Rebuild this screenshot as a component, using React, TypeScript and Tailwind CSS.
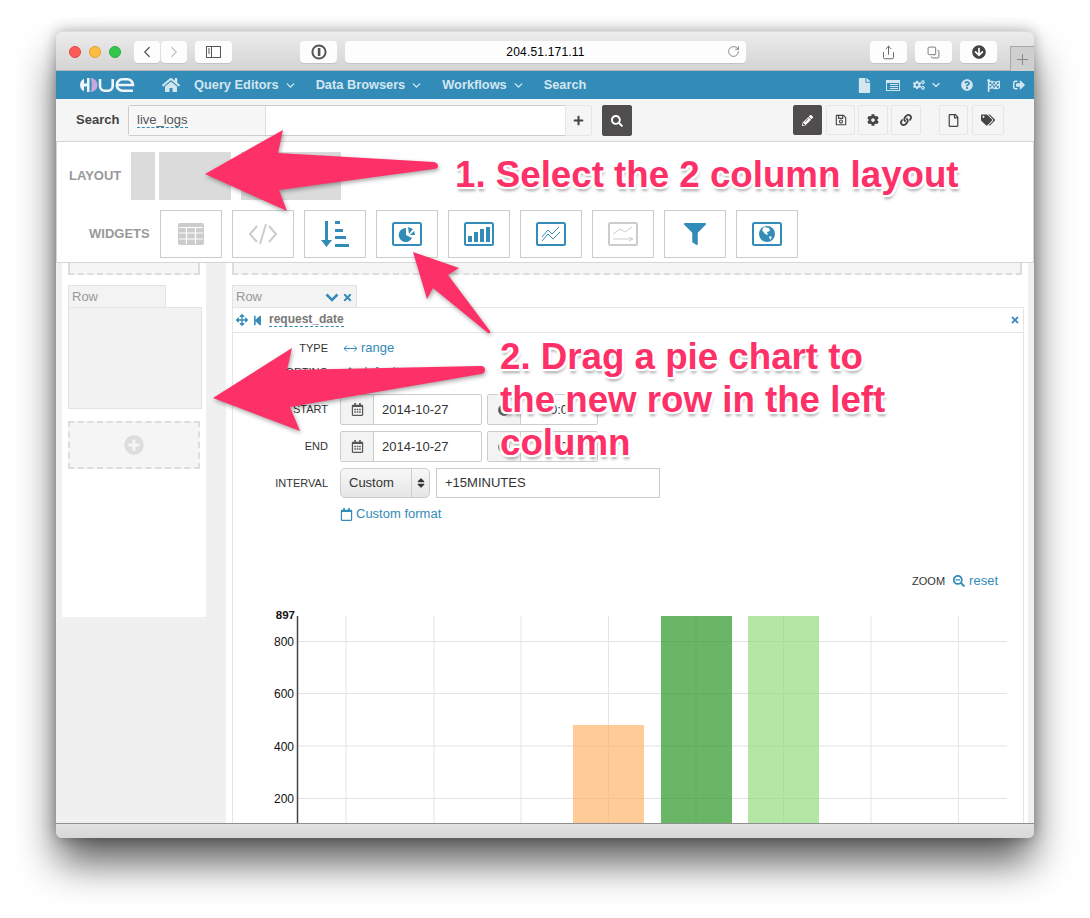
import { ChevronDown, ChevronLeft, ChevronRight, Copy, RotateCw, Share } from "lucide-react";
import {
  FaArrowCircleDown,
  FaArrowsAlt,
  FaClock,
  FaCog,
  FaCogs,
  FaFile,
  FaFilter,
  FaFlagCheckered,
  FaHome,
  FaLink,
  FaPencilAlt,
  FaPlus,
  FaPlusCircle,
  FaQuestionCircle,
  FaRegCalendar,
  FaRegCalendarAlt,
  FaRegFile,
  FaRegSave,
  FaSearch,
  FaSearchMinus,
  FaSignOutAlt,
  FaSort,
  FaStepBackward,
  FaTags,
  FaTimes,
} from "react-icons/fa";

const BLUE = "#338bb8";

function Logo() {
  return (
    <svg width="56" height="14" viewBox="0 0 56 14" className="shrink-0">
      <path d="M8 0 A7 7 0 0 0 8 14 Z" fill="#eef4f8" />
      <rect x="5" y="0" width="3" height="5.5" fill={BLUE} />
      <rect x="5" y="8.5" width="3" height="5.5" fill={BLUE} />
      <rect x="8" y="0" width="2.5" height="14" fill="#eef4f8" />
      <path d="M11.5 0 A7 7 0 0 1 11.5 14 Q14 7 11.5 0 Z" fill="#c9a6df" />
      <path d="M21 1 V8 A4.7 4.7 0 0 0 25.7 12.7 H29 A4.7 4.7 0 0 0 33.7 8 V1" fill="none" stroke="#eef4f8" strokeWidth="2.6" />
      <path d="M38 7 H54 A5.7 5.7 0 0 0 48.3 1.3 H43.5 A5.7 5.7 0 0 0 43.5 12.7 H54" fill="none" stroke="#eef4f8" strokeWidth="2.6" />
    </svg>
  );
}

function TitleButton({ className, children }: { className: string; children?: React.ReactNode }) {
  return (
    <div className={`h-[22px] rounded-[4px] bg-[#fdfdfd] flex items-center justify-center text-[#555] shadow-[0_1px_0_#c4c4c4] ${className}`}>
      {children}
    </div>
  );
}

function TitleBar() {
  return (
    <div className="h-[40px] shrink-0 flex pt-[9px] pl-[13px] bg-gradient-to-b from-[#ececec] to-[#d4d4d4] border-t border-[#dcdcdc] border-b-[1px] border-b-[#b5b5b5] rounded-t-[6px]">
      <div className="flex gap-2 pt-[5px]">
        <div className="w-3 h-3 rounded-full bg-[#fc5b57] border border-[#e2463f]" />
        <div className="w-3 h-3 rounded-full bg-[#fdbc40] border border-[#e1a029]" />
        <div className="w-3 h-3 rounded-full bg-[#34c84a] border border-[#2bad3c]" />
      </div>
      <TitleButton className="w-[26px] ml-[13px]"><ChevronLeft size={18} strokeWidth={1.6} /></TitleButton>
      <TitleButton className="w-[26px] ml-px text-[#c4c4c4]"><ChevronRight size={18} strokeWidth={1.6} /></TitleButton>
      <TitleButton className="w-[37px] ml-2">
        <svg width="15" height="12" viewBox="0 0 15 12" fill="none" stroke="#555"><rect x=".5" y=".5" width="14" height="11" /><path d="M5.5 .5V11.5M2 3H4M2 5H4M2 7H4" /></svg>
      </TitleButton>
      <TitleButton className="w-[37px] ml-[68px]">
        <svg width="16" height="16" viewBox="0 0 16 16"><circle cx="8" cy="8" r="6.6" fill="none" stroke="#555" strokeWidth="2" /><rect x="6.8" y="4" width="2.6" height="8" fill="#555" /></svg>
      </TitleButton>
      <div className="w-[401px] ml-2 h-[22px] rounded-[4px] bg-[#fdfdfd] shadow-[0_1px_0_#c4c4c4] relative flex items-center justify-center text-[12px] text-black tracking-[0.2px]">
        204.51.171.11
        <RotateCw size={13} strokeWidth={1.4} className="absolute right-[6px] top-[4px] text-[#666]" />
      </div>
      <TitleButton className="w-[37px] ml-[124px]"><Share size={15} strokeWidth={1.4} /></TitleButton>
      <TitleButton className="w-[37px] ml-2"><Copy size={13} strokeWidth={1.4} className="-scale-x-100 -scale-y-100" /></TitleButton>
      <TitleButton className="w-[37px] ml-2"><FaArrowCircleDown size={14} className="text-[#444]" /></TitleButton>
      <div className="w-[24px] h-[25px] ml-[13px] -mb-[1px] self-end border-l border-t border-[#a8a8a8] bg-[#cfcfcf] flex items-center justify-center">
        <PlusThin />
      </div>
    </div>
  );
}

function PlusThin() {
  return (
    <svg width="11" height="11" viewBox="0 0 11 11" stroke="#888"><path d="M5.5 0V11M0 5.5H11" /></svg>
  );
}

function NavItem({ label, caret = true, className }: { label: string; caret?: boolean; className: string }) {
  return (
    <div className={`flex items-center whitespace-nowrap font-bold text-[12.8px] text-[#d3e6f0] ${className}`}>
      {label}
      {caret && <ChevronDown size={13} strokeWidth={2.6} className="ml-[5px]" />}
    </div>
  );
}

function Nav() {
  return (
    <div className="h-[28px] shrink-0 flex items-center pl-[23px] pr-[9px] bg-[#338bb8] text-[#d3e6f0]">
      <Logo />
      <FaHome size={18} className="ml-[27px]" />
      <NavItem label="Query Editors" className="ml-[14px]" />
      <NavItem label="Data Browsers" className="ml-[19px]" />
      <NavItem label="Workflows" className="ml-[19px]" />
      <NavItem label="Search" caret={false} className="ml-[19px]" />
      <FaFile size={15} className="ml-auto" />
      <svg width="14" height="11" viewBox="0 0 14 11" className="ml-[14px]">
        <rect width="14" height="11" fill="#d3e6f0" />
        <path d="M1 3H13V10H1Z" fill={BLUE} />
        <path d="M4 4.5H12M4 6.5H12M4 8.5H12" stroke="#d3e6f0" />
      </svg>
      <FaCogs size={12} className="ml-[13px]" />
      <ChevronDown size={12} strokeWidth={2.6} className="ml-[5px]" />
      <FaQuestionCircle size={12} className="ml-[19px]" />
      <FaFlagCheckered size={13} className="ml-[14px]" />
      <FaSignOutAlt size={12} className="ml-[13px]" />
    </div>
  );
}

function ToolButton({ dark, className, children }: { dark?: boolean; className: string; children: React.ReactNode }) {
  return (
    <div
      className={`h-[30px] flex items-center justify-center rounded-[2px] border ${
        dark ? "bg-[#504d4f] border-[#504d4f] text-white" : "bg-[#f5f5f5] border-[#e6e6e6] text-[#444]"
      } ${className}`}
    >
      {children}
    </div>
  );
}

function SearchBar() {
  return (
    <div className="h-[42px] shrink-0 flex items-start pt-[6px] pl-[20px] bg-[#f5f5f5] text-[#444]">
      <div className="w-[52px] h-[28px] mt-px flex items-center font-bold text-[13px]">Search</div>
      <div className="w-[437px] h-[31px] flex bg-white border border-[#ccc] rounded-l-[3px] border-r-0">
        <div className="w-[137px] bg-[#f7f7f7] border-r border-[#ddd] pl-[8px] flex items-center text-[13px] text-[#555]">
          <span className="border-b border-dashed border-[#338bb8] leading-[14px]">live_logs</span>
        </div>
      </div>
      <ToolButton className="w-[27px] h-[31px] rounded-l-none"><FaPlus size={11} /></ToolButton>
      <ToolButton dark className="w-[30px] h-[31px] ml-[10px]"><FaSearch size={12} /></ToolButton>
      <ToolButton dark className="w-[29px] ml-[161px]"><FaPencilAlt size={11} /></ToolButton>
      <ToolButton className="w-[29px] ml-[4px]"><FaRegSave size={12} /></ToolButton>
      <ToolButton className="w-[30px] ml-[3px]"><FaCog size={12} /></ToolButton>
      <ToolButton className="w-[30px] ml-[3px]"><FaLink size={12} /></ToolButton>
      <ToolButton className="w-[29px] ml-[18px]"><FaRegFile size={13} /></ToolButton>
      <ToolButton className="w-[32px] ml-[4px]"><FaTags size={14} /></ToolButton>
    </div>
  );
}

function WidgetBox({ children }: { children: React.ReactNode }) {
  return <div className="w-[62px] h-[48px] border border-[#ccc] bg-white flex items-center justify-center">{children}</div>;
}

function ChartFrame({ color = BLUE, children }: { color?: string; children: React.ReactNode }) {
  return (
    <svg width="30" height="24" viewBox="0 0 30 24">
      <rect x="1" y="1" width="28" height="22" rx="1.5" fill="none" stroke={color} strokeWidth="2" />
      {children}
    </svg>
  );
}

function LayoutPanel() {
  return (
    <div className="h-[122px] shrink-0 bg-white border border-[#d5d5d5] rounded-[2px] relative z-10 flex flex-col">
      <div className="flex h-[58px] items-start pt-[10px] pl-[12px]">
        <div className="w-[62px] h-[48px] flex items-center font-bold text-[13px] text-[#999]">LAYOUT</div>
        <div className="w-[24px] h-[48px] bg-[#dbdbdb]" />
        <div className="w-[72px] h-[48px] bg-[#dbdbdb] ml-[4px]" />
        <div className="w-[100px] h-[48px] bg-[#dbdbdb] ml-[10px]" />
      </div>
      <div className="flex items-center pl-[32px] pt-[10px]">
        <div className="w-[71px] font-bold text-[13px] text-[#999]">WIDGETS</div>
        <div className="flex gap-[10px]">
          <WidgetBox>
            <svg width="26" height="22" viewBox="0 0 26 22">
              <rect width="26" height="22" rx="2" fill="#ccc" />
              <path d="M1 4.5H25M1 10H25M1 16H25M8.5 4V21M17.5 4V21" stroke="#fff" strokeWidth="1.2" />
            </svg>
          </WidgetBox>
          <WidgetBox>
            <svg width="30" height="24" viewBox="0 0 30 24" fill="none" stroke="#ccc" strokeWidth="2"><path d="M9 4L2 12L9 20M21 4L28 12L21 20M18 2L12 22" /></svg>
          </WidgetBox>
          <WidgetBox>
            <svg width="28" height="28" viewBox="0 0 28 28" fill={BLUE}>
              <path d="M4 1H7V20H11L5.5 27L0 20H4Z" />
              <rect x="14" y="1" width="5" height="3" />
              <rect x="14" y="9" width="8" height="3" />
              <rect x="14" y="16" width="11" height="3" />
              <rect x="14" y="24" width="14" height="3" />
            </svg>
          </WidgetBox>
          <WidgetBox>
            <ChartFrame>
              <path d="M14 6V13L20 16A7 7 0 1 1 14 6Z" fill={BLUE} />
              <path d="M16 5L21 7L17 12Z" fill={BLUE} />
              <path d="M22 9L23 13L18 13Z" fill={BLUE} />
            </ChartFrame>
          </WidgetBox>
          <WidgetBox>
            <ChartFrame>
              <g fill={BLUE}><rect x="4" y="14" width="4" height="6" /><rect x="10" y="10" width="4" height="10" /><rect x="16" y="7" width="4" height="13" /><rect x="22" y="5" width="4" height="15" /></g>
            </ChartFrame>
          </WidgetBox>
          <WidgetBox>
            <ChartFrame>
              <path d="M6 15L12 8L16 12L23 5M6 19L12 12L17 17L24 10" fill="none" stroke={BLUE} />
            </ChartFrame>
          </WidgetBox>
          <WidgetBox>
            <ChartFrame color="#ccc">
              <path d="M5 12L12 7L17 10L24 5M5 17H24M21 15L25 17L21 19" fill="none" stroke="#ccc" />
            </ChartFrame>
          </WidgetBox>
          <WidgetBox><FaFilter size={22} style={{ color: BLUE }} /></WidgetBox>
          <WidgetBox>
            <ChartFrame>
              <circle cx="15" cy="12" r="8" fill={BLUE} />
              <path d="M12 5L17 6L18 9L15 10L16 13L13 12L10 8ZM17 14L20 15L18 18Z" fill="#fff" />
            </ChartFrame>
          </WidgetBox>
        </div>
      </div>
    </div>
  );
}

function DashedStub({ className }: { className: string }) {
  return <div className={`h-[12px] bg-[#f5f5f5] border-2 border-t-0 border-dashed border-[#ddd] ${className}`} />;
}

function LeftColumn() {
  return (
    <div className="w-[170px] shrink-0 bg-[#f0f0f0] pl-[6px]">
      <div className="w-[144px] h-[354px] bg-white pl-[6px]">
        <DashedStub className="w-[132px]" />
        <div className="w-[98px] h-[22px] mt-[10px] bg-[#f3f3f3] border border-b-0 border-[#e3e3e3] pl-[3px] text-[13px] leading-[21px] text-[#999]">Row</div>
        <div className="w-[134px] h-[102px] bg-[#f2f2f2] border border-[#e3e3e3]" />
        <div className="w-[132px] h-[48px] mt-[12px] bg-[#f5f5f5] border-2 border-dashed border-[#ddd] flex items-center justify-center">
          <FaPlusCircle size={20} className="text-[#ddd]" />
        </div>
      </div>
    </div>
  );
}

function FieldLabel({ children }: { children: React.ReactNode }) {
  return <div className="w-[95px] text-right text-[11px] text-[#333] shrink-0">{children}</div>;
}

function DateField({ value }: { value: string }) {
  return (
    <div className="flex gap-[5px] h-[31px]">
      <div className="w-[142px] flex border border-[#ccc] rounded-[2px]">
        <div className="w-[33px] bg-[#f3f3f3] border-r border-[#ccc] flex items-center justify-center"><FaRegCalendarAlt size={13} className="text-[#555]" /></div>
        <div className="flex-1 flex items-center pl-[8px] text-[13px] text-[#333]">{value}</div>
      </div>
      <div className="w-[111px] flex border border-[#ccc] rounded-[2px]">
        <div className="w-[33px] bg-[#f3f3f3] border-r border-[#ccc] flex items-center justify-center"><FaClock size={12} className="text-[#555]" /></div>
        <div className="flex-1 flex items-center justify-center text-[13px] text-[#333]">00:00</div>
      </div>
    </div>
  );
}

function Facet() {
  return (
    <div className="flex flex-col pb-[8px]">
      <div className="flex items-center h-[24px] mt-[3px] gap-[16px]">
        <FieldLabel>TYPE</FieldLabel>
        <div className="flex items-center gap-[4px] text-[13px]" style={{ color: BLUE }}>
          <svg width="13" height="7" viewBox="0 0 13 7" fill="none" stroke={BLUE}><path d="M0 3.5H13M3 .5L0 3.5L3 6.5M10 .5L13 3.5L10 6.5" /></svg>
          range
        </div>
      </div>
      <div className="flex items-center h-[24px] gap-[16px]">
        <FieldLabel>SORTING</FieldLabel>
        <div className="flex items-center gap-[4px] text-[13px]" style={{ color: BLUE }}>
          <FaSort size={12} />
          default
        </div>
      </div>
      <div className="flex items-center mt-[10px] gap-[12px]">
        <FieldLabel>START</FieldLabel>
        <DateField value="2014-10-27" />
      </div>
      <div className="flex items-center mt-[6px] gap-[12px]">
        <FieldLabel>END</FieldLabel>
        <DateField value="2014-10-27" />
      </div>
      <div className="flex items-center mt-[6px] gap-[12px]">
        <FieldLabel>INTERVAL</FieldLabel>
        <div className="flex gap-[6px] h-[30px]">
          <div className="w-[90px] flex border border-[#ccc] rounded-[5px] bg-gradient-to-b from-[#f8f8f8] to-[#e6e6e6] text-[13px] text-[#333]">
            <div className="flex-1 flex items-center pl-[8px]">Custom</div>
            <div className="w-[18px] border-l border-[#ccc] flex items-center justify-center"><FaSort size={12} /></div>
          </div>
          <div className="w-[224px] border border-[#ccc] flex items-center pl-[8px] text-[13px] text-[#333]">+15MINUTES</div>
        </div>
      </div>
      <div className="flex items-center mt-[7px] gap-[12px] h-[18px]">
        <div className="w-[95px] shrink-0" />
        <div className="flex items-center gap-[3px] text-[13px]" style={{ color: BLUE }}>
          <FaRegCalendar size={13} />
          Custom format
        </div>
      </div>
    </div>
  );
}

function Chart() {
  const gridX = [346, 434, 521, 608.5, 696, 783.5, 871, 958.5];
  const gridY = [
    { y: 641.5, label: "800" },
    { y: 693.5, label: "600" },
    { y: 746, label: "400" },
    { y: 798.5, label: "200" },
  ];
  // viewBox uses page coordinates so the numbers read off the screenshot directly
  return (
    <svg width="790" height="218" viewBox="233 605 790 218" className="block shrink-0">
      {gridX.map((x) => (
        <line key={x} x1={x} x2={x} y1="616" y2="823" stroke="#e5e5e5" />
      ))}
      {gridY.map((g) => (
        <line key={g.y} x1="298" x2="1007" y1={g.y} y2={g.y} stroke="#e3e3e3" />
      ))}
      <rect x="573" y="725" width="71" height="98" fill="#ffb062" fillOpacity="0.65" />
      <rect x="661" y="616" width="71" height="207" fill="#2f9a2c" fillOpacity="0.72" />
      <rect x="748" y="616" width="71" height="207" fill="#8cd977" fillOpacity="0.65" />
      <line x1="297.5" x2="297.5" y1="616" y2="823" stroke="#444" strokeWidth="1.5" />
      <text x="295" y="619" textAnchor="end" fontSize="11.5" fontWeight="bold" fill="#111">897</text>
      {gridY.map((g) => (
        <text key={g.label} x="294" y={g.y + 4.5} textAnchor="end" fontSize="12" fill="#111">{g.label}</text>
      ))}
    </svg>
  );
}

function MainColumn() {
  return (
    <div className="flex-1 bg-white pl-[6px] overflow-hidden">
      <DashedStub className="w-[790px]" />
      <div className="w-[125px] h-[23px] mt-[10px] bg-[#f3f3f3] border border-b-0 border-[#e3e3e3] pl-[3px] pr-[3px] flex items-center text-[13px] text-[#999]">
        Row
        <svg width="14" height="9" viewBox="0 0 14 9" fill="none" stroke={BLUE} strokeWidth="2.6" className="ml-auto"><path d="M1.5 1.5L7 7L12.5 1.5" /></svg>
        <FaTimes size={11} className="ml-[3px]" style={{ color: BLUE }} />
      </div>
      <div className="w-[792px] h-[516px] border border-b-0 border-[#e5e5e5] flex flex-col -mt-px">
        <div className="h-[25px] shrink-0 flex items-center pl-[3px] pr-[3px] border-b border-[#e5e5e5]" style={{ color: BLUE }}>
          <FaArrowsAlt size={12} />
          <FaStepBackward size={11} className="ml-[4px]" />
          <span className="ml-[6px] font-bold text-[12px] text-[#777] border-b border-dashed leading-[13px]" style={{ borderColor: BLUE }}>request_date</span>
          <FaTimes size={10} className="ml-auto" />
        </div>
        <Facet />
        <div className="flex items-center justify-end pr-[25px] mt-[41px] h-[18px] shrink-0">
          <span className="text-[11px] text-[#333]">ZOOM</span>
          <FaSearchMinus size={12} className="ml-[8px]" style={{ color: BLUE }} />
          <span className="ml-[4px] text-[13px]" style={{ color: BLUE }}>reset</span>
        </div>
        <div className="mt-[15px]"><Chart /></div>
      </div>
    </div>
  );
}

function Annotations() {
  const note = "absolute font-bold text-[#fe3068] text-[36.7px] leading-[43px] whitespace-nowrap [text-shadow:2px_0_1px_#fff,-2px_0_1px_#fff,0_2px_1px_#fff,0_-2px_1px_#fff,2px_2px_1px_#fff,-2px_-2px_1px_#fff,2px_-2px_1px_#fff,-2px_2px_1px_#fff,1px_4px_3px_rgba(0,0,0,0.35)]";
  return (
    <>
      <svg width="1090" height="918" viewBox="0 0 1090 918" className="absolute inset-0 z-20 pointer-events-none drop-shadow-[1px_2px_2px_rgba(0,0,0,0.35)]">
        <path d="M205 174L283 130L278 153L434 162Q438 163 438 166Q438 169 434 169L279 190L287 211Z" fill="#fe3068" />
        <path d="M413 252L459 268L448 275L490 331Q491 334 488 333L433 288L427 299Z" fill="#fe3068" />
        <path d="M213 398L292 348L287 370L481 366Q485 366 485 370Q485 373 481 374L290 407L300 431Z" fill="#fe3068" />
      </svg>
      <div className={`${note} z-30 left-[455px] top-[153px]`}>1. Select the 2 column layout</div>
      <div className={`${note} z-30 left-[500px] top-[335px]`}>
        2. Drag a pie chart to
        <br />
        the new row in the left
        <br />
        column
      </div>
    </>
  );
}

export default function App() {
  return (
    <div className="relative w-[1090px] h-[918px] bg-white overflow-hidden pt-[31px] pl-[56px] font-['Liberation_Sans',Arial,sans-serif]">
      <div className="w-[978px] h-[807px] flex flex-col rounded-[6px] bg-[#dcdcdc] shadow-[0_26px_40px_-2px_rgba(0,0,0,0.65),0_0_14px_rgba(0,0,0,0.3)]">
        <TitleBar />
        <Nav />
        <SearchBar />
        <LayoutPanel />
        <div className="h-[560px] shrink-0 flex bg-[#f0f0f0] overflow-hidden">
          <LeftColumn />
          <MainColumn />
          <div className="w-[6px] shrink-0 bg-[#f0f0f0]" />
        </div>
        <div className="h-[15px] shrink-0 border-t border-[#8f8f8f] bg-gradient-to-b from-[#e2e2e2] to-[#d8d8d8] rounded-b-[6px]" />
      </div>
      <Annotations />
    </div>
  );
}
